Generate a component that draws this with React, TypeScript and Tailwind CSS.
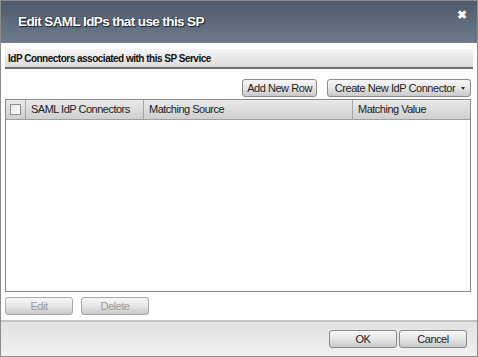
import React from "react";

const font = { fontFamily: '"Liberation Sans", Arial, sans-serif' };

function Btn({ children, className = "", disabled = false }: { children: React.ReactNode; className?: string; disabled?: boolean }) {
  return (
    <div
      className={`flex items-center justify-center h-[18px] whitespace-nowrap rounded-[3px] border bg-gradient-to-b from-[#f7f7f7] via-[#e6e6e6] to-[#c9c9c9] text-[11px] tracking-[-0.45px] leading-none ${disabled ? "text-[#9a9a9a] border-[#a8a8a8]" : "text-[#222] border-[#8a8a8a]"} ${className}`}
    >
      {children}
    </div>
  );
}

export default function App() {
  return (
    <div style={font} className="w-[478px] h-[357px] border border-[#8c8c8c] flex flex-col bg-white overflow-hidden">
      <div className="h-[42px] shrink-0 flex items-center justify-between pl-[17px] pr-[10px] bg-gradient-to-b from-[#4f5b6b] to-[#6d7b8d] relative">
        <span className="text-white font-bold text-[13.5px] tracking-[-0.6px] mt-[1px] whitespace-nowrap" style={{ textShadow: "0 0 2px #1d2530, 1px 1px 1px #1d2530" }}>
          Edit SAML IdPs that use this SP
        </span>
        <span className="absolute right-[10px] top-[5px] text-white text-[12px] font-bold" style={{ textShadow: "0 0 1px #222" }}>✖</span>
      </div>
      <div className="flex-1 flex flex-col px-[4px] pt-[6px]">
        <div className="h-[20px] flex items-center pl-[3px] bg-gradient-to-b from-[#f4f4f4] to-[#dcdcdc] border-b-[2px] border-[#6e6e6e] text-[10px] tracking-[-0.5px] font-bold text-[#111] whitespace-nowrap">
          IdP Connectors associated with this SP Service
        </div>
        <div className="flex justify-end gap-[10px] mt-[10px] pr-[2px]">
          <Btn className="w-[75px]">Add New Row</Btn>
          <Btn className="w-[144px] relative pr-[8px]">
            Create New IdP Connector
            <span className="absolute right-[5px] top-[7px] w-0 h-0 border-l-[2px] border-r-[2px] border-t-[3px] border-l-transparent border-r-transparent border-t-[#333]" />
          </Btn>
        </div>
        <div className="mt-[2px] mr-[2px] h-[193px] border border-[#8a8a8a] flex flex-col">
          <div className="h-[20px] flex text-[11px] tracking-[-0.5px] text-[#222] bg-gradient-to-b from-[#e9e9e9] to-[#cfcfcf] border-b border-[#a0a0a0] whitespace-nowrap">
            <div className="w-[20px] flex items-center justify-center border-r border-[#a5a5a5]">
              <div className="w-[11px] h-[11px] border border-[#8f8f8f] bg-gradient-to-br from-[#e6e6e6] to-[#ffffff]" />
            </div>
            <div className="w-[118px] flex items-center pl-[5px] border-r border-[#a5a5a5]">SAML IdP Connectors</div>
            <div className="w-[209px] flex items-center pl-[5px] border-r border-[#a5a5a5]">Matching Source</div>
            <div className="flex-1 flex items-center pl-[5px]">Matching Value</div>
          </div>
        </div>
        <div className="flex gap-[8px] mt-[5px]">
          <Btn disabled className="w-[68px]">Edit</Btn>
          <Btn disabled className="w-[68px]">Delete</Btn>
        </div>
      </div>
      <div className="h-[36px] shrink-0 border-t-[2px] border-[#c4c4c4] bg-gradient-to-b from-[#e2e2e2] to-[#f0f0f0] flex items-center justify-end gap-[2px] pr-[10px]">
        <Btn className="w-[68px]">OK</Btn>
        <Btn className="w-[68px]">Cancel</Btn>
      </div>
    </div>
  );
}
